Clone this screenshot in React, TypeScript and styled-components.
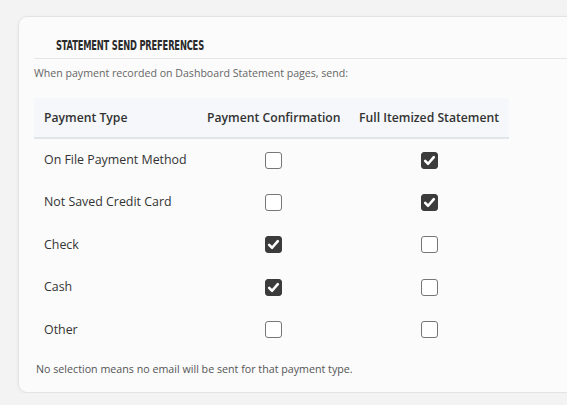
import { createGlobalStyle, styled } from "styled-components";

const GlobalStyle = createGlobalStyle`
  html, body {
    margin: 0;
    padding: 0;
    background: #f3f3f3;
    overflow: hidden;
  }
  body {
    font-family: "Open Sans", "Noto Sans", sans-serif;
    color: #333;
  }
`;

type Row = {
  label: string;
  confirmation: boolean;
  itemized: boolean;
};

const rows: Row[] = [
  { label: "On File Payment Method", confirmation: false, itemized: true },
  { label: "Not Saved Credit Card", confirmation: false, itemized: true },
  { label: "Check", confirmation: true, itemized: false },
  { label: "Cash", confirmation: true, itemized: false },
  { label: "Other", confirmation: false, itemized: false },
];

const Checkbox = ({ checked }: { checked: boolean }) => (
  <BoxStyled $checked={checked}>
    {checked && (
      <svg width="13" height="13" viewBox="0 0 12 12">
        <path
          d="M2 6.3 L4.7 9 L10 2.9"
          fill="none"
          stroke="#fff"
          strokeWidth="2.4"
          strokeLinecap="round"
          strokeLinejoin="round"
        />
      </svg>
    )}
  </BoxStyled>
);

export default function App() {
  return (
    <>
      <GlobalStyle />
      <PageStyled>
        <CardStyled>
          <HeaderStyled>
            <TitleStyled>Statement Send Preferences</TitleStyled>
          </HeaderStyled>

          <NoteStyled>
            When payment recorded on Dashboard Statement pages, send:
          </NoteStyled>

          <TableStyled>
            <colgroup>
              <ColStyled $width={163} />
              <ColStyled $width={152} />
              <ColStyled $width={160} />
            </colgroup>
            <thead>
              <tr>
                <HeadCell>Payment Type</HeadCell>
                <HeadCell $center>Payment Confirmation</HeadCell>
                <HeadCell $center>Full Itemized Statement</HeadCell>
              </tr>
            </thead>
            <tbody>
              {rows.map((row) => (
                <tr key={row.label}>
                  <BodyCell>{row.label}</BodyCell>
                  <BodyCell $center>
                    <Checkbox checked={row.confirmation} />
                  </BodyCell>
                  <BodyCell $center>
                    <Checkbox checked={row.itemized} />
                  </BodyCell>
                </tr>
              ))}
            </tbody>
          </TableStyled>

          <FootnoteStyled>
            No selection means no email will be sent for that payment type.
          </FootnoteStyled>
        </CardStyled>
      </PageStyled>
    </>
  );
}

const PageStyled = styled.div`
  padding: 16px 0 0 18px;
  width: 600px;
`;

const CardStyled = styled.section`
  box-sizing: border-box;
  width: 580px;
  padding: 0 15px 15px 15px;
  border: 1px solid #e3e3e3;
  border-radius: 9px;
  background: #fbfbfb;
  box-shadow: 0 1px 4px rgba(0, 0, 0, 0.04);
`;

const HeaderStyled = styled.div`
  display: flex;
  align-items: center;
  height: 41px;
  padding-left: 22px;
  border-bottom: 1px solid #e6e6e6;
`;

const TitleStyled = styled.h2`
  display: inline-block;
  margin: 15px 0 0 0;
  font-family: "DejaVu Sans Condensed", "Liberation Sans Narrow", sans-serif;
  font-size: 14px;
  line-height: 16px;
  font-weight: 700;
  text-transform: uppercase;
  color: #2a2a2a;
  letter-spacing: -0.25px;
  transform: scaleX(0.66);
  transform-origin: left center;
  white-space: nowrap;
`;

const NoteStyled = styled.p`
  margin: 7px 0 0 0;
  font-size: 10.6px;
  line-height: 15px;
  color: #666;
`;

const TableStyled = styled.table`
  margin-top: 17px;
  width: 475px;
  border-collapse: collapse;
  table-layout: fixed;
  font-size: 12.4px;
`;

const ColStyled = styled.col<{ $width: number }>`
  width: ${({ $width }) => $width}px;
`;

const HeadCell = styled.th<{ $center?: boolean }>`
  box-sizing: border-box;
  height: 40px;
  padding: 0 10px;
  background: #f5f7fa;
  border-bottom: 2px solid #e1e4e8;
  font-size: 12.2px;
  font-weight: 600;
  text-align: ${({ $center }) => ($center ? "center" : "left")};
  color: #333;
  white-space: nowrap;
`;

const BodyCell = styled.td<{ $center?: boolean }>`
  box-sizing: border-box;
  height: 42.5px;
  padding: 0 10px;
  text-align: ${({ $center }) => ($center ? "center" : "left")};
  vertical-align: middle;
  white-space: nowrap;
`;

const BoxStyled = styled.span<{ $checked: boolean }>`
  display: inline-flex;
  align-items: center;
  justify-content: center;
  box-sizing: border-box;
  width: 17px;
  height: 17px;
  border-radius: 3px;
  vertical-align: middle;
  border: 1px solid ${({ $checked }) => ($checked ? "#3b3b3b" : "#767676")};
  background: ${({ $checked }) => ($checked ? "#3b3b3b" : "#fff")};
`;

const FootnoteStyled = styled.p`
  margin: 11px 0 0 2px;
  font-size: 10.7px;
  line-height: 15px;
  color: #555;
`;
